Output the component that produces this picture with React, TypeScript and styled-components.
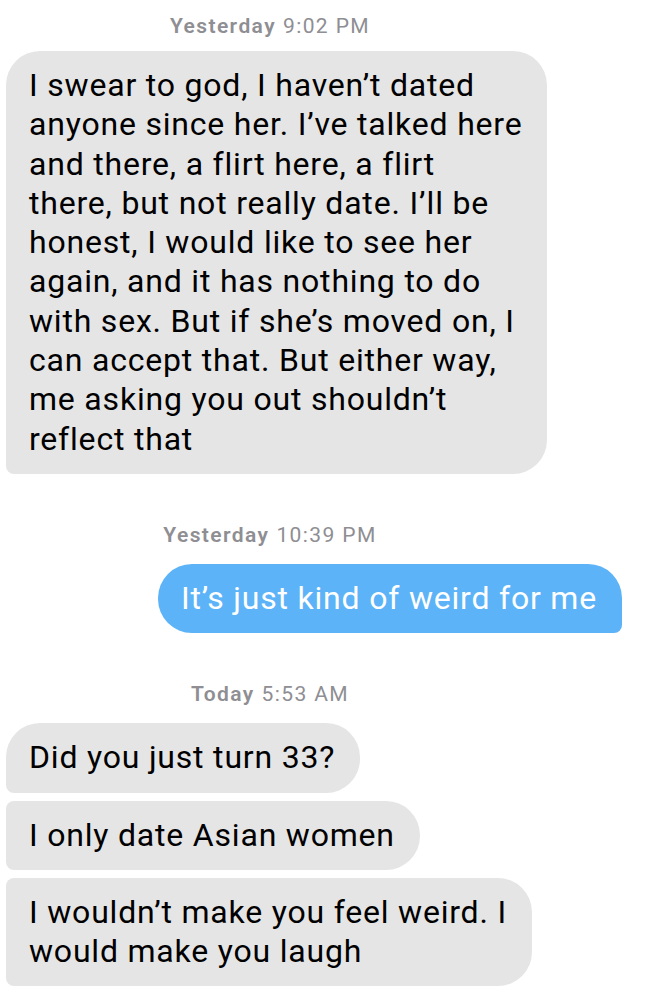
import React from "react";
import styled, { createGlobalStyle } from "styled-components";

const GlobalStyle = createGlobalStyle`
  html, body {
    margin: 0;
    padding: 0;
    background: #ffffff;
  }
  body {
    font-family: Roboto, "Noto Sans", "Liberation Sans", sans-serif;
    -webkit-font-smoothing: antialiased;
  }
`;

const Thread = styled.div`
  display: flex;
  flex-direction: column;
  width: 646px;
  height: 993px;
  overflow: hidden;
  padding: 15px 0 0 6px;
  box-sizing: border-box;
`;

const Group = styled.section`
  display: flex;
  flex-direction: column;
  gap: 8px;
  margin-top: 50px;
  &:first-child {
    margin-top: 0;
  }
`;

const Stamp = styled.div<{ $tight?: boolean }>`
  padding-right: 112px;
  margin-bottom: ${(p) => (p.$tight ? "6px" : "10px")};
  text-align: center;
  font-size: 21px;
  line-height: 22px;
  letter-spacing: 1.4px;
  color: #8e8e93;
  b {
    font-weight: 600;
    margin-right: 7px;
  }
`;

const Row = styled.div<{ $out?: boolean }>`
  display: flex;
  justify-content: ${(p) => (p.$out ? "flex-end" : "flex-start")};
  padding-right: ${(p) => (p.$out ? "24px" : "0")};
`;

const Bubble = styled.div<{ $out?: boolean; $first?: boolean }>`
  padding: 15px 25px 15px 23px;
  font-size: 32px;
  line-height: 39.3px;
  letter-spacing: 0.8px;
  white-space: pre-line;
  color: ${(p) => (p.$out ? "#ffffff" : "#000000")};
  background: ${(p) => (p.$out ? "#5cb3f7" : "#e5e5e5")};
  border-radius: ${(p) =>
    p.$out
      ? "34px 34px 8px 34px"
      : `${p.$first ? "34px" : "8px"} 34px 34px 8px`};
`;

type Msg = { text: string; out?: boolean };
type Chunk = { day: string; time: string; msgs: Msg[] };

const chunks: Chunk[] = [
  {
    day: "Yesterday",
    time: "9:02 PM",
    msgs: [
      {
        text:
          "I swear to god, I haven\u2019t dated\nanyone since her. I\u2019ve talked here\nand there, a flirt here, a flirt\nthere, but not really date. I\u2019ll be\nhonest, I would like to see her\nagain, and it has nothing to do\nwith sex. But if she\u2019s moved on, I\ncan accept that. But either way,\nme asking you out shouldn\u2019t\nreflect that",
      },
    ],
  },
  {
    day: "Yesterday",
    time: "10:39 PM",
    msgs: [{ text: "It\u2019s just kind of weird for me", out: true }],
  },
  {
    day: "Today",
    time: "5:53 AM",
    msgs: [
      { text: "Did you just turn 33?" },
      { text: "I only date Asian women" },
      { text: "I wouldn\u2019t make you feel weird. I\nwould make you laugh" },
    ],
  },
];

export default function App() {
  return (
    <>
      <GlobalStyle />
      <Thread>
        {chunks.map((c, i) => (
          <Group key={i}>
            <Stamp $tight={i === 0}>
              <b>{c.day}</b>
              {c.time}
            </Stamp>
            {c.msgs.map((m, j) => (
              <Row key={j} $out={m.out}>
                <Bubble $out={m.out} $first={j === 0}>
                  {m.text}
                </Bubble>
              </Row>
            ))}
          </Group>
        ))}
      </Thread>
    </>
  );
}
